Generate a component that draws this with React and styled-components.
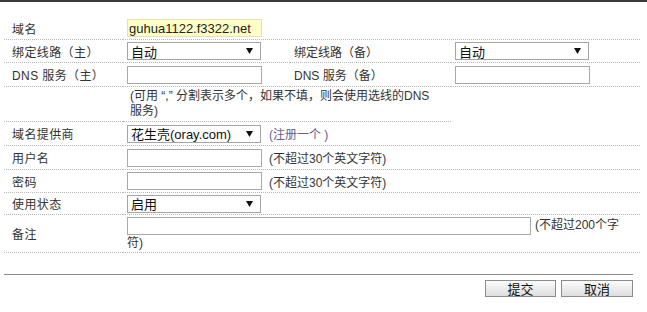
import React from 'react'
import styled, { createGlobalStyle } from 'styled-components'

const Global = createGlobalStyle`
    body {
        margin: 0;
        background: #fff;
        font-family: "Liberation Sans", "Noto Sans CJK SC", sans-serif;
        font-size: 12px;
        color: #333;
    }
`

export default function App () {
    return (
        <Page>
            <Global />
            <Form>
                <Row h={23}>
                    <Label>域名</Label>
                    <Cell span={3}><Input w={135} highlight value="guhua1122.f3322.net" readOnly /></Cell>
                </Row>
                <Row h={23}>
                    <Label>绑定线路（主）</Label>
                    <Cell><Select value="自动" /></Cell>
                    <Cell>绑定线路（备）</Cell>
                    <Cell><Select value="自动" /></Cell>
                </Row>
                <Row h={24}>
                    <Label>DNS 服务（主）</Label>
                    <Cell><Input w={135} /></Cell>
                    <Cell>DNS 服务（备）</Cell>
                    <Cell><Input w={135} /></Cell>
                </Row>
                <Row h={35}>
                    <Label />
                    <Hint span={2}>(可用 “,” 分割表示多个，如果不填，则会使用选线的DNS<br />服务)</Hint>
                    <Cell plain />
                </Row>
                <Row h={24}>
                    <Label>域名提供商</Label>
                    <Cell span={3}><Select value="花生壳(oray.com)" /><Link>(注册一个 )</Link></Cell>
                </Row>
                <Row h={24}>
                    <Label>用户名</Label>
                    <Cell span={3}><Input w={135} /><Note>(不超过30个英文字符)</Note></Cell>
                </Row>
                <Row h={23}>
                    <Label>密码</Label>
                    <Cell span={3}><Input w={135} type="password" /><Note>(不超过30个英文字符)</Note></Cell>
                </Row>
                <Row h={22}>
                    <Label>使用状态</Label>
                    <Cell span={3}><Select value="启用" /></Cell>
                </Row>
                <Row h={37}>
                    <Label>备注</Label>
                    <Flow span={3}><Input w={404} inline />(不超过200个字符)</Flow>
                </Row>
            </Form>
            <Footer>
                <Button>提交</Button>
                <Button w={72}>取消</Button>
            </Footer>
        </Page>
    )
}

function Select (props) {
    return (
        <FakeSelect>
            <span>{ props.value }</span>
            <svg width="7" height="6" viewBox="0 0 7 6"><path d="M0 0 H7 L3.5 6 Z" fill="#111" /></svg>
        </FakeSelect>
    )
}

const Page = styled.div`
    border-top: 2px solid #3a3a3a;
    padding-top: 15px;
    width: 647px;
    height: 310px;
`
const Form = styled.div`
    margin-left: 4px;
    width: 636px;
`
const Row = styled.div`
    display: grid;
    grid-template-columns: 119px 167px 161px 189px;
    height: ${ props => props.h }px;
`
const Cell = styled.div`
    grid-column: span ${ props => props.span || 1 };
    display: flex;
    align-items: center;
    box-sizing: border-box;
    padding-left: 4px;
    white-space: nowrap;
    border-bottom: 1px dotted ${ props => props.plain ? 'transparent' : '#b8b8b8' };
`
const Label = styled(Cell)`
    padding-left: 8px;
    letter-spacing: 0.4px;
`
const Hint = styled.div`
    grid-column: span ${ props => props.span || 1 };
    align-self: stretch;
    display: flex;
    flex-direction: column;
    justify-content: center;
    box-sizing: border-box;
    padding: 0 0 0 7px;
    line-height: 15px;
    border-bottom: 1px dotted #b8b8b8;
`
const Flow = styled.div`
    grid-column: span ${ props => props.span || 1 };
    box-sizing: border-box;
    padding: 2px 10px 0 4px;
    line-height: 17px;
    border-bottom: 1px dotted #b8b8b8;
`
const Input = styled.input`
    box-sizing: border-box;
    width: ${ props => props.w }px;
    height: 18px;
    margin: 0 ${ props => props.inline ? 4 : 0 }px 0 0;
    padding: 0 1px;
    border: 1px solid ${ props => props.highlight ? '#e2e2b8' : '#a9a9a9' };
    background: ${ props => props.highlight ? '#ffffc6' : '#fff' };
    font: 13px "Liberation Sans", "Noto Sans CJK SC", sans-serif;
    color: #222;
    vertical-align: top;
    outline: none;
`
const FakeSelect = styled.div`
    box-sizing: border-box;
    width: 134px;
    height: 18px;
    display: flex;
    align-items: center;
    justify-content: space-between;
    padding: 0 7px 0 3px;
    border: 1px solid #a5a5a5;
    background: #fff;
    color: #111;
    font-size: 13px;
`
const Note = styled.span`
    margin-left: 7px;
`
const Link = styled.span`
    margin-left: 8px;
    color: #6b5a8a;
`
const Footer = styled.div`
    margin: 22px 0 0 4px;
    width: 629px;
    border-top: 1px solid #8a8a8a;
    padding-top: 5px;
    display: flex;
    justify-content: flex-end;
    gap: 5px;
`
const Button = styled.button`
    width: ${ props => props.w || 71 }px;
    height: 17px;
    padding: 0;
    border: 1px solid #8c8c8c;
    background: linear-gradient(#fbfbfb, #dedede);
    font: 13px "Noto Sans CJK SC", sans-serif;
    line-height: 15px;
    color: #111;
`
